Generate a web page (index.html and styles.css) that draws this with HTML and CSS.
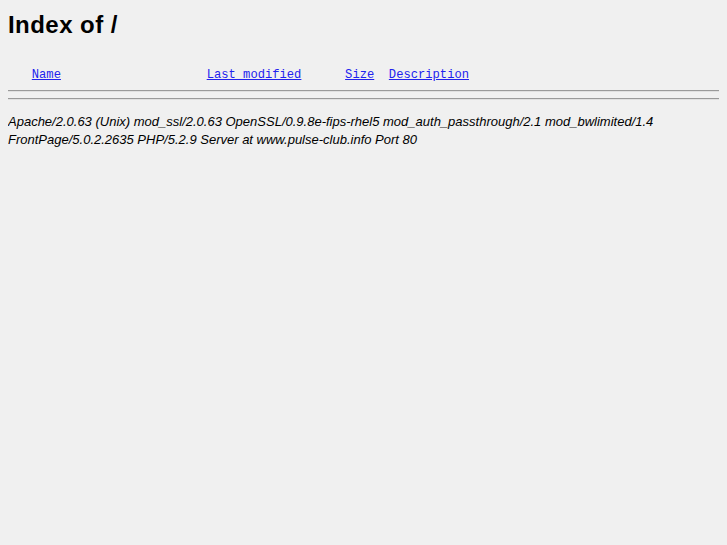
FILE: index.html
```html
<!DOCTYPE html>
<html>
<head>
<meta charset="utf-8">
<title>Index of /</title>
<link rel="stylesheet" href="styles.css">
</head>
<body class="page">
<h1 class="title">Index of /</h1>
<pre class="listing"><span class="icon"></span> <a class="col" href="#">Name</a>                    <a class="col" href="#">Last modified</a>      <a class="col" href="#">Size</a>  <a class="col" href="#">Description</a><hr class="rule"></pre>
<hr class="rule rule-bottom">
<address class="sig">Apache/2.0.63 (Unix) mod_ssl/2.0.63 OpenSSL/0.9.8e-fips-rhel5 mod_auth_passthrough/2.1 mod_bwlimited/1.4 FrontPage/5.0.2.2635 PHP/5.2.9 Server at www.pulse-club.info Port 80</address>
</body>
</html>
```
FILE: styles.css
```css
html {
  background: #f0f0f0;
}
.page {
  margin: 8px;
  background: #f0f0f0;
  color: #000;
  font-family: "Liberation Sans", Arial, sans-serif;
}
.title {
  font-family: "Liberation Sans", Arial, sans-serif;
  font-size: 24px;
  letter-spacing: 0.45px;
  font-weight: bold;
  margin: 3px 0 0 0;
  line-height: 28px;
}
.listing {
  font-family: "Liberation Mono", "Courier New", monospace;
  font-size: 12.15px;
  line-height: 15px;
  margin: 29px 0 0 0;
}
.icon {
  display: inline-block;
  width: 16.5px;
  height: 1px;
}
.col {
  color: #2222ee;
}
.rule {
  border: 0;
  border-top: 1px solid #9a9a9a;
  border-bottom: 1px solid #e0e0e0;
  height: 0;
  margin: 7px 0 0 0;
}
.rule-bottom {
  margin: 6px 0 0 0;
}
.sig {
  font-style: italic;
  font-size: 13px;
  line-height: 18px;
  margin-top: 13px;
}
```
